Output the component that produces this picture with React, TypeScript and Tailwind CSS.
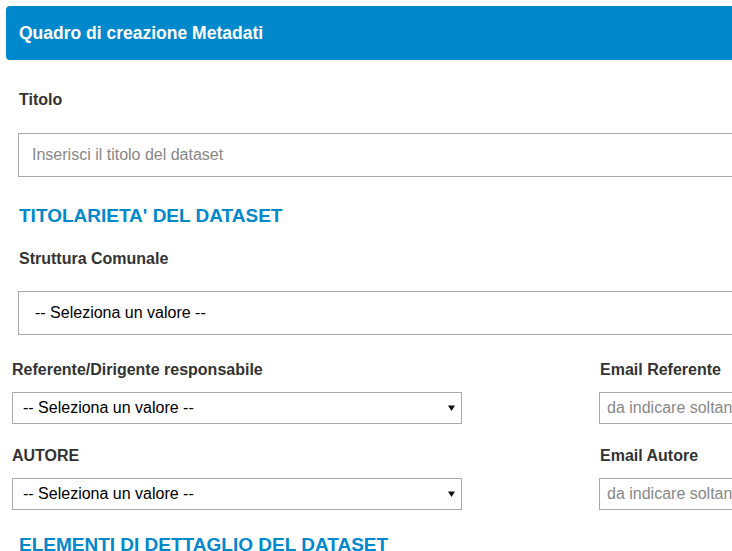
import React from "react";

function Arrow() {
  return (
    <svg width="7" height="6" viewBox="0 0 7 6" className="shrink-0">
      <path d="M0 0.5 H7 L3.5 6 Z" fill="#111" />
    </svg>
  );
}

function SmallSelect() {
  return (
    <div className="mt-[12px] h-[32px] w-[450px] border border-[#aaa] bg-white flex items-center justify-between pl-[10px] pr-[6px] text-[16px] text-black">
      <span>-- Seleziona un valore --</span>
      <Arrow />
    </div>
  );
}

function EmailInput() {
  return (
    <div className="mt-[12px] h-[32px] w-[300px] border border-[#aaa] bg-white flex items-center pl-[7px] text-[16px] text-[#888] whitespace-nowrap overflow-hidden">
      da indicare soltanto se non presente in rubrica
    </div>
  );
}

export default function App() {
  return (
    <div className="w-[732px] h-[551px] overflow-hidden bg-white font-['Liberation_Sans',Arial,sans-serif] text-[#333]">
      <div className="w-[1000px] pl-[6px] pt-[6px]">
        <div className="h-[54px] bg-[#0088cc] rounded-[4px] flex items-center pl-[13px] text-white font-bold text-[17.5px]">
          Quadro di creazione Metadati
        </div>
        <div className="pl-[12px]">
          <div className="mt-[30px] h-[20px] leading-[20px] pl-[1px] font-bold text-[16px]">Titolo</div>
          <div className="mt-[23px] h-[44px] border border-[#aaa] flex items-center pl-[13px] text-[16px] text-[#888]">
            Inserisci il titolo del dataset
          </div>
          <div className="mt-[27px] h-[24px] leading-[24px] pl-[1px] font-bold text-[19px] text-[#0088cc]">
            TITOLARIETA' DEL DATASET
          </div>
          <div className="mt-[21px] h-[20px] leading-[20px] pl-[1px] font-bold text-[16px]">Struttura Comunale</div>
          <div className="mt-[22px] h-[44px] border border-[#aaa] flex items-center pl-[16px] text-[16px] text-black">
            -- Seleziona un valore --
          </div>
        </div>
        <div className="flex gap-[137px] pl-[6px]">
          <div className="flex flex-col">
            <div className="mt-[25px] h-[20px] leading-[20px] font-bold text-[16px]">Referente/Dirigente responsabile</div>
            <SmallSelect />
            <div className="mt-[22px] h-[20px] leading-[20px] font-bold text-[16px]">AUTORE</div>
            <SmallSelect />
          </div>
          <div className="flex flex-col">
            <div className="mt-[25px] h-[20px] leading-[20px] pl-[1px] font-bold text-[16px]">Email Referente</div>
            <EmailInput />
            <div className="mt-[22px] h-[20px] leading-[20px] pl-[1px] font-bold text-[16px]">Email Autore</div>
            <EmailInput />
          </div>
        </div>
        <div className="pl-[13px] mt-[23px] h-[24px] leading-[24px] font-bold text-[19px] text-[#0088cc]">
          ELEMENTI DI DETTAGLIO DEL DATASET
        </div>
      </div>
    </div>
  );
}
